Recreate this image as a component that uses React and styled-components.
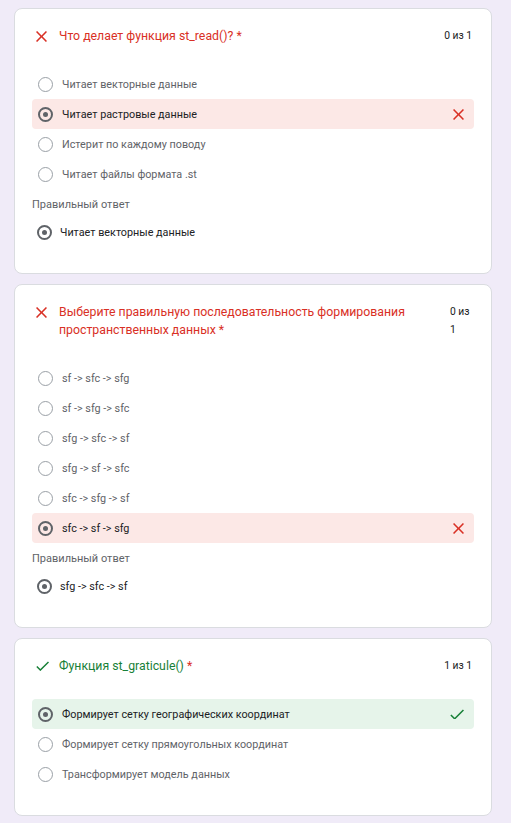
import React from "react";
import styled, {createGlobalStyle} from "styled-components";

const questions = [
  {
    id: 1,
    ok: false,
    title: "Что делает функция st_read()?",
    score: "0 из 1",
    options: ["Читает векторные данные", "Читает растровые данные", "Истерит по каждому поводу", "Читает файлы формата .st"],
    picked: 1,
    answer: "Читает векторные данные"
  },
  {
    id: 2,
    ok: false,
    title: "Выберите правильную последовательность формирования пространственных данных",
    score: "0 из 1",
    narrowScore: true,
    options: ["sf -> sfc -> sfg", "sf -> sfg -> sfc", "sfg -> sfc -> sf", "sfg -> sf -> sfc", "sfc -> sfg -> sf", "sfc -> sf -> sfg"],
    picked: 5,
    answer: "sfg -> sfc -> sf"
  },
  {
    id: 3,
    ok: true,
    title: "Функция st_graticule()",
    score: "1 из 1",
    options: ["Формирует сетку географических координат", "Формирует сетку прямоугольных координат", "Трансформирует модель данных"],
    picked: 0
  }
];

const CrossIcon = ({size = 11}) => (
  <svg width={size} height={size} viewBox="5 5 14 14">
    <path fill="#d93025" d="M19 6.41L17.59 5 12 10.59 6.41 5 5 6.41 10.59 12 5 17.59 6.41 19 12 13.41 17.59 19 19 17.59 13.41 12z"/>
  </svg>
);

const CheckIcon = ({width = 13}) => (
  <svg width={width} height={width * 14 / 18} viewBox="3 5 18 14">
    <path fill="#188038" d="M9 16.17L4.83 12l-1.42 1.41L9 19 21 7l-1.41-1.41z"/>
  </svg>
);

const App = () => {
  return <>
    <GlobalStyle/>
    <Page>
      {questions.map(q => (
        <Card key={q.id}>
          <Header>
            <StatusIcon>{q.ok ? <CheckIcon/> : <CrossIcon/>}</StatusIcon>
            <Title $ok={q.ok}>{q.title} <Star>*</Star></Title>
            <Score $narrow={q.narrowScore}>{q.score}</Score>
          </Header>
          <Options>
            {q.options.map((o, i) => {
              const picked = i === q.picked;
              return <Option key={o} $state={picked ? (q.ok ? "right" : "wrong") : ""}>
                <Radio $checked={picked}/>
                <OptionText $checked={picked}>{o}</OptionText>
                {picked && <RowMark>{q.ok ? <CheckIcon width={14}/> : <CrossIcon size={11}/>}</RowMark>}
              </Option>
            })}
          </Options>
          {q.answer && <>
            <AnswerLabel>Правильный ответ</AnswerLabel>
            <Option $answer>
              <Radio $checked/>
              <OptionText $checked>{q.answer}</OptionText>
            </Option>
          </>}
        </Card>
      ))}
    </Page>
  </>
};

const GlobalStyle = createGlobalStyle`
  body {
    margin: 0;
    background: #f0ebf8;
    font-family: Roboto, "Noto Sans", Arial, sans-serif;
  }
`;

const Page = styled.main`
  display: flex;
  flex-direction: column;
  gap: 10px;
  padding: 8px 19px 8px 14px;
`;

const Card = styled.section`
  background: #ffffff;
  border: 1px solid #dadce0;
  border-radius: 8px;
  padding: 18px 17px 26px 17px;
`;

const Header = styled.div`
  display: flex;
  align-items: flex-start;
  gap: 10px;
  padding-left: 4px;
  margin-bottom: 24px;
`;

const StatusIcon = styled.div`
  flex: none;
  width: 13px;
  height: 18px;
  display: flex;
  align-items: center;
`;

const Title = styled.div`
  flex: 1;
  min-width: 0;
  font-size: 12.3px;
  line-height: 18px;
  color: ${p => p.$ok ? "#188038" : "#d93025"};
`;

const Star = styled.span`
  color: #d93025;
`;

const Score = styled.div`
  flex: none;
  width: ${p => p.$narrow ? "22px" : "auto"};
  margin-left: ${p => p.$narrow ? "16px" : "0"};
  margin-right: 2px;
  font-size: 10.3px;
  line-height: 18px;
  color: #202124;
`;

const Options = styled.div`
  display: flex;
  flex-direction: column;
`;

const Option = styled.div`
  display: flex;
  align-items: center;
  height: 30px;
  gap: ${p => p.$answer ? "8px" : "9px"};
  padding-left: ${p => p.$answer ? "5px" : "6px"};
  padding-right: 10px;
  border-radius: 4px;
  background: ${p => p.$state === "wrong" ? "#fce8e6" : p.$state === "right" ? "#e6f4ea" : "transparent"};
`;

const Radio = styled.span`
  flex: none;
  box-sizing: border-box;
  width: 15px;
  height: 15px;
  border-radius: 50%;
  border: ${p => p.$checked ? "2px solid #5f6368" : "1.5px solid #9aa0a6"};
  display: flex;
  align-items: center;
  justify-content: center;
  &::after {
    content: "";
    display: ${p => p.$checked ? "block" : "none"};
    width: 5px;
    height: 5px;
    border-radius: 50%;
    background: #5f6368;
  }
`;

const OptionText = styled.span`
  flex: 1;
  font-size: 10.8px;
  color: ${p => p.$checked ? "#202124" : "#5f6368"};
`;

const RowMark = styled.span`
  flex: none;
  display: flex;
  align-items: center;
`;

const AnswerLabel = styled.div`
  margin: 8px 0 4px 0;
  font-size: 11px;
  line-height: 16px;
  color: #5f6368;
`;

export default App;
